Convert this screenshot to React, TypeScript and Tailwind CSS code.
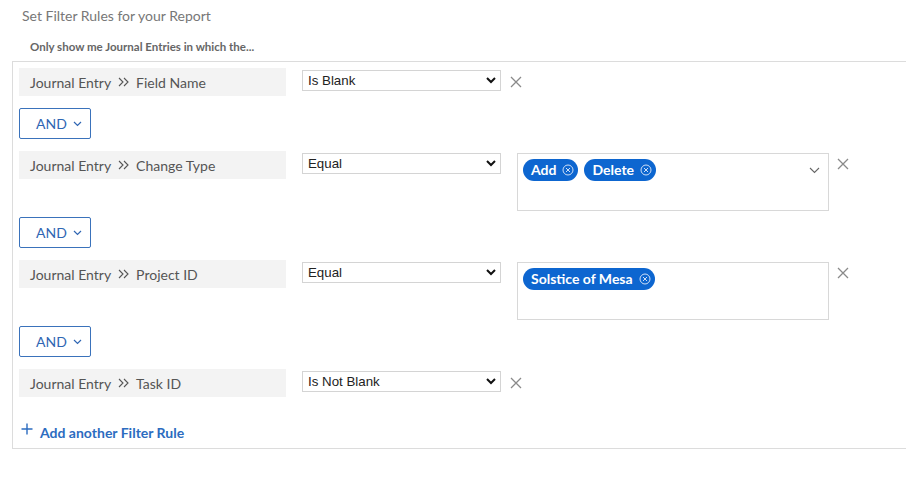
import React from "react";

const XIcon = () => (
  <svg width="12" height="12" viewBox="0 0 12 12" className="shrink-0">
    <path d="M1 1 L11 11 M11 1 L1 11" stroke="#8a8a8a" strokeWidth="1.3" fill="none" />
  </svg>
);

const Chip = ({ label }: { label: string }) => (
  <div className="flex items-center h-[22px] rounded-full bg-[#0d66d0] pl-[8px] pr-[4px] gap-[6px] text-white text-[14px] font-bold">
    <span className="leading-none">{label}</span>
    <svg width="12" height="12" viewBox="0 0 12 12">
      <circle cx="6" cy="6" r="5" stroke="#cfe0f7" strokeWidth="1" fill="none" />
      <path d="M4 4 L8 8 M8 4 L4 8" stroke="#cfe0f7" strokeWidth="1" />
    </svg>
  </div>
);

const Select = ({ value }: { value: string }) => (
  <div className="mt-[2px] w-[199px] h-[21px] border border-[#d4d4d4] bg-white flex items-center justify-between pl-[5px] pr-[4px] shrink-0">
    <span className="text-[13.3px] text-[#222] font-['Liberation_Sans',Arial,sans-serif]">{value}</span>
    <svg width="10" height="7" viewBox="0 0 10 7">
      <path d="M1 1 L5 5 L9 1" stroke="#111" strokeWidth="2" fill="none" />
    </svg>
  </div>
);

const Label = ({ field }: { field: string }) => (
  <div className="w-[267px] h-[28px] bg-[#f3f3f3] flex items-center pl-[11px] text-[14px] text-[#555] shrink-0">
    <span>Journal Entry</span>
    <svg width="11" height="10" viewBox="0 0 11 10" className="mx-[7px]">
      <path d="M1 1 L5 5 L1 9 M6 1 L10 5 L6 9" stroke="#555" strokeWidth="1.1" fill="none" />
    </svg>
    <span>{field}</span>
  </div>
);

const AndButton = () => (
  <div className="mt-[6px] mb-[12px] w-[72px] h-[31px] border border-[#3a72bb] rounded-[2px] flex items-center pl-[16px] gap-[6px] text-[14px] text-[#2f66b3]">
    <span>AND</span>
    <svg width="9" height="6" viewBox="0 0 9 6">
      <path d="M1 1 L4.5 4.5 L8 1" stroke="#2f66b3" strokeWidth="1.2" fill="none" />
    </svg>
  </div>
);

const SimpleRow = ({ field, op }: { field: string; op: string }) => (
  <div className="flex items-start min-h-[34px]">
    <Label field={field} />
    <div className="ml-[16px]"><Select value={op} /></div>
    <div className="ml-[9px] mt-[8px]"><XIcon /></div>
  </div>
);

const MultiRow = ({ field, op, chips, chevron }: { field: string; op: string; chips: string[]; chevron?: boolean }) => (
  <div className="flex items-start">
    <Label field={field} />
    <div className="ml-[16px]"><Select value={op} /></div>
    <div className="ml-[16px] mt-[2px] w-[312px] h-[58px] border border-[#d8d8d8] bg-white flex items-start justify-between pl-[5px] pr-[8px] pt-[5px]">
      <div className="flex gap-[6px]">
        {chips.map((c) => (
          <Chip key={c} label={c} />
        ))}
      </div>
      {chevron && (
        <svg width="11" height="7" viewBox="0 0 11 7" className="mt-[8px]">
          <path d="M1 1 L5.5 5.5 L10 1" stroke="#666" strokeWidth="1.1" fill="none" />
        </svg>
      )}
    </div>
    <div className="ml-[8px] mt-[7px]"><XIcon /></div>
  </div>
);

export default function App() {
  return (
    <div className="w-[906px] h-[494px] bg-white font-['Lato','Open_Sans',sans-serif] overflow-hidden">
      <div className="pl-[22px] pt-[7px] text-[14px] text-[#777] leading-[18px]">Set Filter Rules for your Report</div>
      <div className="pl-[30px] pt-[15px] text-[11.5px] font-bold text-[#666] leading-[14px]">
        Only show me Journal Entries in which the...
      </div>
      <div className="ml-[12px] mt-[7px] border-t border-l border-b border-[#dcdcdc] pl-[6px] pt-[6px] pb-[6px]">
        <SimpleRow field="Field Name" op="Is Blank" />
        <AndButton />
        <MultiRow field="Change Type" op="Equal" chips={["Add", "Delete"]} chevron />
        <AndButton />
        <MultiRow field="Project ID" op="Equal" chips={["Solstice of Mesa"]} />
        <AndButton />
        <SimpleRow field="Task ID" op="Is Not Blank" />
        <div className="mt-[19px] h-[20px] flex items-center pl-[2px] gap-[7px] text-[14px] font-bold text-[#2c6cc0]">
          <svg width="12" height="12" viewBox="0 0 12 12" className="-mt-[6px]">
            <path d="M6 0.5 V11.5 M0.5 6 H11.5" stroke="#2c6cc0" strokeWidth="1.4" />
          </svg>
          <span>Add another Filter Rule</span>
        </div>
      </div>
    </div>
  );
}
